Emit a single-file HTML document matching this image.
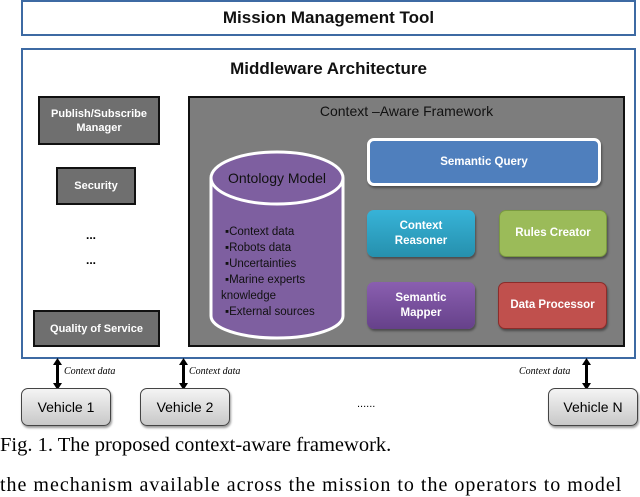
<!DOCTYPE html>
<html><head><style>
*{margin:0;padding:0;box-sizing:border-box}
body{width:640px;height:483px;background:#fff;position:relative;overflow:hidden;font-family:"Liberation Sans",sans-serif}
.a{position:absolute}
.c{display:flex;align-items:center;justify-content:center;text-align:center}
.g{background:#6f6f6f;border:2px solid #111;color:#fff;font-weight:bold;font-size:11px;line-height:14px}
.r{border-radius:7px;color:#fff;font-weight:bold;font-size:11.5px;line-height:15px;box-shadow:1px 2px 2px rgba(0,0,0,.4)}
.v{background:linear-gradient(#f4f4f4,#c8c8c8);border:1px solid #444;border-radius:7px;font-size:14px;box-shadow:1px 2px 2px rgba(0,0,0,.4)}
.lab{font-family:"Liberation Serif",serif;font-style:italic;font-size:10px}
</style></head><body>
<div class="a c" style="left:21px;top:0;width:615px;height:36px;border:2px solid #3d6aa3;font-size:17px;font-weight:bold;color:#111">Mission Management Tool</div>
<div class="a" style="left:21px;top:48px;width:615px;height:311px;border:2px solid #3d6aa3"></div>
<div class="a c" style="left:21px;top:56px;width:615px;height:26px;font-size:17px;font-weight:bold;color:#111">Middleware Architecture</div>
<div class="a c g" style="left:38px;top:96px;width:122px;height:49px">Publish/Subscribe<br>Manager</div>
<div class="a c g" style="left:56px;top:167px;width:80px;height:38px">Security</div>
<div class="a" style="left:86px;top:228px;font-size:12px;font-weight:bold">...</div>
<div class="a" style="left:86px;top:253px;font-size:12px;font-weight:bold">...</div>
<div class="a c g" style="left:33px;top:310px;width:127px;height:37px">Quality of Service</div>
<div class="a" style="left:188px;top:96px;width:437px;height:251px;background:#7d7d7d;border:2px solid #111"></div>
<div class="a c" style="left:188px;top:100px;width:437px;height:22px;font-size:14px;color:#111">Context –Aware Framework</div>
<svg class="a" style="left:205px;top:148px" width="145" height="192">
<path d="M6 30 L6 168 A66 22 0 0 0 138 168 L138 30" fill="#7e5fa0" stroke="#fff" stroke-width="3"/>
<ellipse cx="72" cy="30" rx="66" ry="26" fill="#7e5fa0" stroke="#fff" stroke-width="3"/>
<text x="72" y="35" text-anchor="middle" font-family="Liberation Sans" font-size="14" fill="#111">Ontology Model</text>
<g font-family="Liberation Sans" font-size="11.5" fill="#111">
<text x="20" y="87">▪Context  data</text>
<text x="20" y="103">▪Robots data</text>
<text x="20" y="119">▪Uncertainties</text>
<text x="20" y="135">▪Marine experts</text>
<text x="16" y="151">knowledge</text>
<text x="20" y="167">▪External sources</text>
</g></svg>
<div class="a c r" style="left:367px;top:138px;width:234px;height:48px;background:#4f7fbd;border:3px solid #fff">Semantic Query</div>
<div class="a c r" style="left:367px;top:210px;width:108px;height:47px;background:linear-gradient(#37b3d8,#2690ad)">Context<br>Reasoner</div>
<div class="a c r" style="left:499px;top:210px;width:108px;height:47px;background:#9bbb59;border:1px solid #7a9a40">Rules Creator</div>
<div class="a c r" style="left:367px;top:282px;width:108px;height:47px;background:linear-gradient(#8a5fb0,#66418a)">Semantic<br>Mapper</div>
<div class="a c r" style="left:498px;top:282px;width:109px;height:47px;background:#c0504d;border:1px solid #8c2c2a">Data Processor</div>
<svg class="a" style="left:0;top:358px" width="640" height="32">
<g fill="#000" stroke="#000" stroke-width="3">
<line x1="57.5" y1="6" x2="57.5" y2="26"/><line x1="183.5" y1="6" x2="183.5" y2="26"/><line x1="586.5" y1="6" x2="586.5" y2="26"/>
</g>
<g fill="#000">
<path d="M53 7 L57.5 0 L62 7Z M53 25 L57.5 32 L62 25Z"/>
<path d="M179 7 L183.5 0 L188 7Z M179 25 L183.5 32 L188 25Z"/>
<path d="M582 7 L586.5 0 L591 7Z M582 25 L586.5 32 L591 25Z"/>
</g></svg>
<div class="a lab" style="left:64px;top:366px">Context data</div>
<div class="a lab" style="left:189px;top:366px">Context data</div>
<div class="a lab" style="left:519px;top:366px">Context data</div>
<div class="a c v" style="left:21px;top:388px;width:90px;height:38px">Vehicle 1</div>
<div class="a c v" style="left:140px;top:388px;width:90px;height:38px">Vehicle 2</div>
<div class="a c v" style="left:548px;top:388px;width:90px;height:38px">Vehicle N</div>
<div class="a" style="left:357px;top:398px;font-size:11px">......</div>
<div class="a" style="left:0;top:434px;font-family:'Liberation Serif',serif;font-size:20.5px;white-space:nowrap">Fig. 1. The proposed context-aware framework.</div>
<div class="a" style="left:0;top:474px;font-family:'Liberation Serif',serif;font-size:20px;white-space:nowrap;letter-spacing:1px">the mechanism available across the mission to the operators to model</div>
</body></html>
